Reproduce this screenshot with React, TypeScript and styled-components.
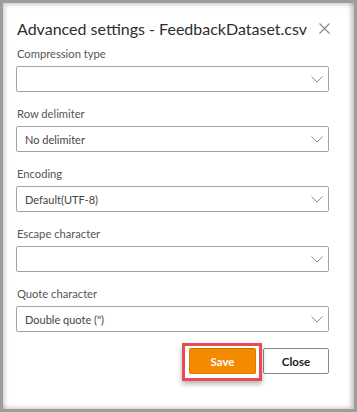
import React from 'react'
import styled, { createGlobalStyle } from 'styled-components'

const GlobalStyle = createGlobalStyle`
    html, body {
        margin: 0;
        padding: 0;
        background: #9d9d9d;
    }
    * { box-sizing: border-box; }
`

const Frame = styled.div`
    width: 357px;
    height: 412px;
    padding: 3px 3px 3px 3px;
    background: #9d9d9d;
    font-family: 'Lato', 'Noto Sans', sans-serif;
`
const Dialog = styled.div`
    height: 100%;
    background: #fff;
    box-shadow: inset 3px 3px 4px -1px rgba(0,0,0,0.18), inset -4px -2px 4px -1px rgba(0,0,0,0.22);
    padding: 15px 25px 0 13px;
    display: flex;
    flex-direction: column;
`
const Header = styled.div`
    display: flex;
    align-items: center;
    justify-content: space-between;
    height: 20px;
    margin-bottom: 8px;
`
const Title = styled.div`
    font-size: 16px;
    color: #2d2d2d;
    white-space: nowrap;
    padding-left: 1px;
`
const CloseX = styled.button`
    border: none;
    background: none;
    padding: 0;
    width: 12px;
    height: 12px;
    margin-right: -1px;
    display: grid;
    place-items: center;
    cursor: pointer;
`
const Field = styled.div`
    display: flex;
    flex-direction: column;
    margin-bottom: 14px;
`
const Label = styled.label`
    font-size: 11.2px;
    line-height: 16px;
    color: #555;
    margin-bottom: 4px;
    padding-left: 1px;
`
const Select = styled.div`
    height: 26px;
    border: 1px solid #a3a3a3;
    border-radius: 2px;
    display: flex;
    align-items: center;
    justify-content: space-between;
    padding: 0 5px 0 8px;
    font-size: 11px;
    color: #444;
`
const Actions = styled.div`
    display: flex;
    justify-content: flex-end;
    gap: 7px;
    margin-top: 2px;
`
const Highlight = styled.div`
    position: relative;
    &::before {
        content: '';
        position: absolute;
        left: -7px;
        right: -6px;
        top: -5px;
        bottom: -7px;
        border: 3px solid #ea4a51;
        box-shadow: 0 3px 5px rgba(0,0,0,0.3);
        pointer-events: none;
    }
`
const Button = styled.button<{ $primary?: boolean }>`
    width: ${p => (p.$primary ? 67 : 66)}px;
    height: 26px;
    font-family: 'Lato', 'Noto Sans', sans-serif;
    font-size: 11.5px;
    font-weight: 700;
    border-radius: 2px;
    cursor: pointer;
    color: ${p => (p.$primary ? '#fff' : '#222')};
    background: ${p => (p.$primary ? '#f38a00' : '#fff')};
    border: 1px solid ${p => (p.$primary ? '#d87c02' : '#8a8a8a')};
    border-top-color: ${p => (p.$primary ? '#c96f00' : '#8a8a8a')};
`

const Chevron = () => (
    <svg width="12" height="7" viewBox="0 0 12 7" fill="none">
        <path d="M0.5 0.5 L6 6 L11.5 0.5" stroke="#8d8d8d" strokeWidth="1" />
    </svg>
)

const fields = [
    { label: 'Compression type', value: '' },
    { label: 'Row delimiter', value: 'No delimiter' },
    { label: 'Encoding', value: 'Default(UTF-8)' },
    { label: 'Escape character', value: '' },
    { label: 'Quote character', value: 'Double quote (")' },
]

const App: React.FC = () => {
    return (
        <Frame>
            <GlobalStyle />
            <Dialog>
                <Header>
                    <Title>Advanced settings - FeedbackDataset.csv</Title>
                    <CloseX aria-label="Close">
                        <svg width="11" height="11" viewBox="0 0 11 11">
                            <path d="M0.5 0.5 L10.5 10.5 M10.5 0.5 L0.5 10.5" stroke="#888" strokeWidth="1.1" />
                        </svg>
                    </CloseX>
                </Header>
                {fields.map(f => (
                    <Field key={f.label}>
                        <Label>{f.label}</Label>
                        <Select>
                            <span>{f.value}</span>
                            <Chevron />
                        </Select>
                    </Field>
                ))}
                <Actions>
                    <Highlight>
                        <Button $primary>Save</Button>
                    </Highlight>
                    <Button>Close</Button>
                </Actions>
            </Dialog>
        </Frame>
    )
}

export default App
